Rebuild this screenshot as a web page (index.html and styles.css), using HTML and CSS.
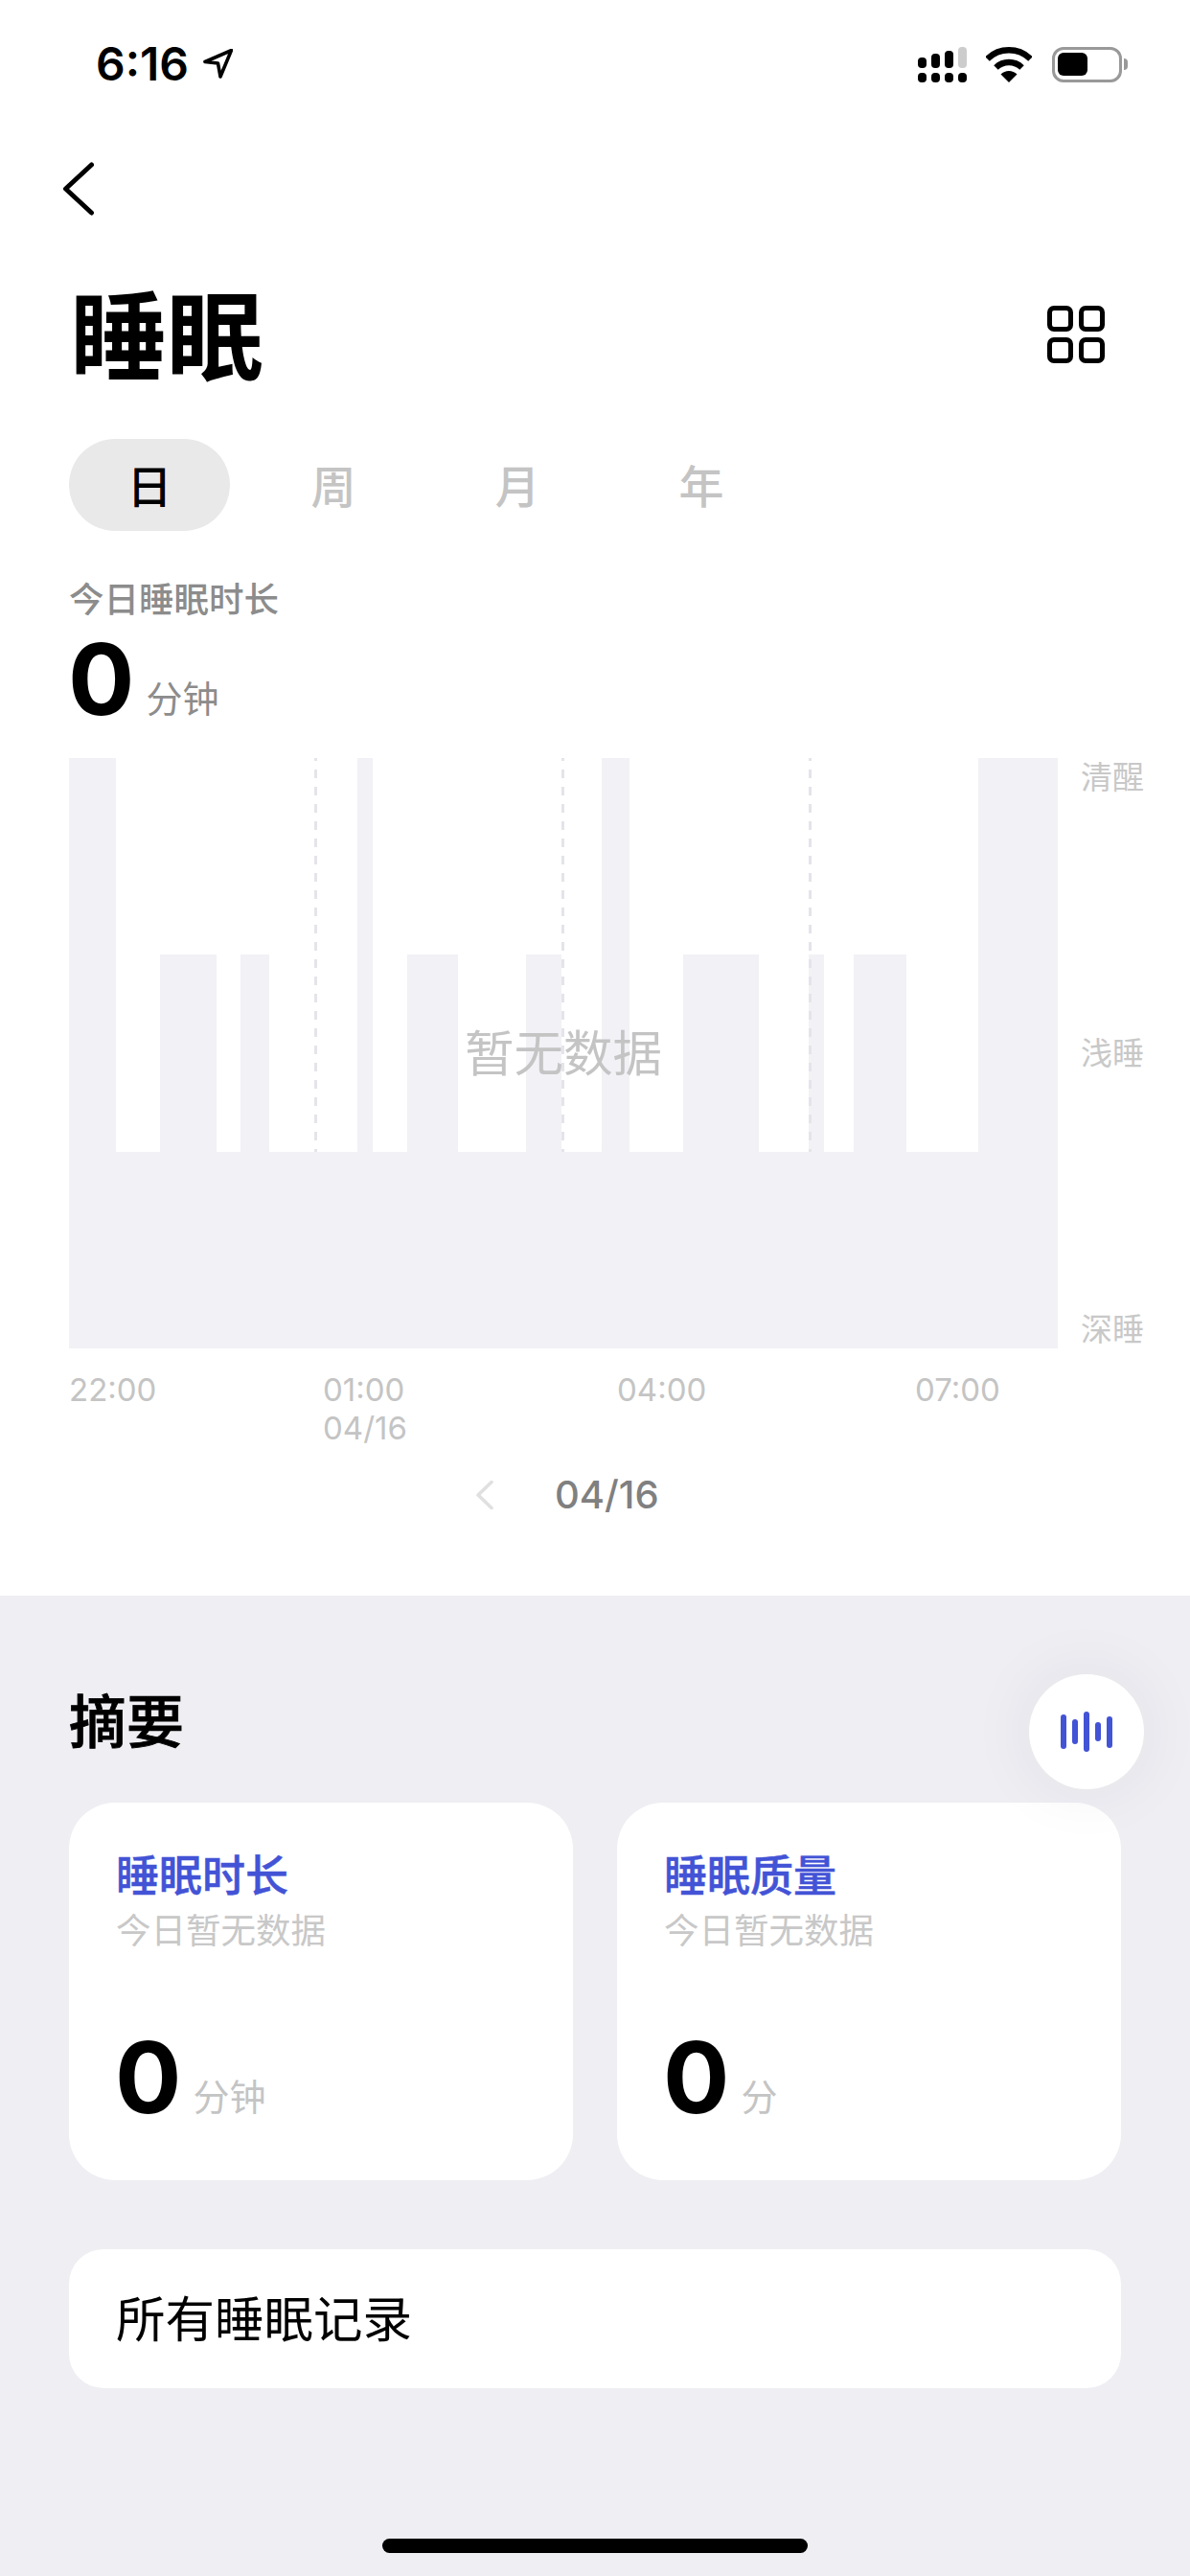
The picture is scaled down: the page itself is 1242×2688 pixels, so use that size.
FILE: index.html
```html
<!DOCTYPE html>
<html lang="zh-CN">
<head>
<meta charset="utf-8">
<title>睡眠</title>
<link rel="stylesheet" href="styles.css">
</head>
<body>
<div class="screen">
  <section class="top">
    <header class="status">
      <div class="status-left">
        <span class="time">6:16</span>
        <svg class="loc" width="31" height="31" viewBox="0 0 31 31"><path d="M29.500 1.500 2 13.500 15.500 15 18 29Z" fill="none" stroke="#000" stroke-width="3.600" stroke-linejoin="round"/></svg>
      </div>
      <div class="status-right">
        <svg width="51" height="37" viewBox="0 0 51 37">
          <rect x="0" y="11" width="9" height="11" rx="4" fill="#000"/><rect x="14" y="7" width="9" height="15" rx="4" fill="#000"/><rect x="28" y="4" width="9" height="18" rx="4" fill="#000"/><rect x="42" y="0" width="9" height="22" rx="4" fill="#ccc"/>
          <rect x="0" y="27" width="9" height="10" rx="4" fill="#000"/><rect x="14" y="27" width="9" height="10" rx="4" fill="#000"/><rect x="28" y="27" width="9" height="10" rx="4" fill="#000"/><rect x="42" y="27" width="9" height="10" rx="4" fill="#000"/>
        </svg>
        <svg width="48" height="37" viewBox="0 0 48 37">
          <path d="M1.500 12.500A32 32 0 0 1 46.500 12.500" fill="none" stroke="#000" stroke-width="6.500"/>
          <path d="M10.500 21.500A19.500 19.500 0 0 1 37.500 21.500" fill="none" stroke="#000" stroke-width="6.500"/>
          <path d="M24 37 15.500 28.500A12 12 0 0 1 32.500 28.500Z" fill="#000"/>
        </svg>
        <div class="battery"><div class="battery-level"></div></div>
        <div class="battery-nub"></div>
      </div>
    </header>
    <nav class="nav">
      <svg width="34" height="56" viewBox="0 0 34 56"><path d="M30.500 3 3.500 28 30.500 53" fill="none" stroke="#000" stroke-width="5" stroke-linecap="round" stroke-linejoin="round"/></svg>
    </nav>
    <div class="title-row">
      <h1 class="title">睡眠</h1>
      <div class="grid-icon"><i></i><i></i><i></i><i></i></div>
    </div>
    <div class="tabs">
      <span class="tab tab-active">日</span>
      <span class="tab">周</span>
      <span class="tab">月</span>
      <span class="tab">年</span>
    </div>
    <div class="today-label">今日睡眠时长</div>
    <div class="today-value"><span class="num">0</span><span class="unit">分钟</span></div>
    <div class="chart-row">
      <div class="chart">
        <svg width="1032" height="616" viewBox="0 0 1032 616">
          <g fill="#f1f1f6">
            <rect x="0" y="411" width="1032" height="205"/>
            <rect x="0" y="0" width="49" height="411"/>
            <rect x="301" y="0" width="16" height="411"/>
            <rect x="556" y="0" width="29" height="411"/>
            <rect x="949" y="0" width="83" height="411"/>
            <rect x="95" y="205" width="59" height="206"/>
            <rect x="179" y="205" width="30" height="206"/>
            <rect x="353" y="205" width="53" height="206"/>
            <rect x="477" y="205" width="37" height="206"/>
            <rect x="641" y="205" width="79" height="206"/>
            <rect x="772" y="205" width="16" height="206"/>
            <rect x="819" y="205" width="55" height="206"/>
          </g>
          <g stroke="#e4e4ea" stroke-width="3" stroke-dasharray="9 9" stroke-dashoffset="6">
            <line x1="257.500" y1="0" x2="257.500" y2="411"/>
            <line x1="515.500" y1="0" x2="515.500" y2="411"/>
            <line x1="773.500" y1="0" x2="773.500" y2="411"/>
          </g>
        </svg>
        <div class="empty">暂无数据</div>
      </div>
      <div class="levels"><span>清醒</span><span>浅睡</span><span>深睡</span></div>
    </div>
    <div class="times">
      <div>22:00</div>
      <div>01:00<br>04/16</div>
      <div>04:00</div>
      <div>07:00</div>
    </div>
    <div class="pager">
      <svg width="18" height="30" viewBox="0 0 18 30"><path d="M16 1.500 2 15 16 28.500" fill="none" stroke="#e0e0e0" stroke-width="3.600" stroke-linecap="round" stroke-linejoin="round"/></svg>
      <span class="pager-date">04/16</span>
    </div>
  </section>
  <section class="summary">
    <h2 class="summary-title">摘要</h2>
    <button class="fab" type="button" aria-label="语音">
      <svg width="54" height="42" viewBox="0 0 54 42">
        <g fill="#4353d6">
          <rect x="0" y="3" width="6" height="36" rx="3"/>
          <rect x="12" y="8" width="6" height="26" rx="3"/>
          <rect x="24" y="0" width="6" height="42" rx="3"/>
          <rect x="36" y="11" width="6" height="20" rx="3"/>
          <rect x="48" y="5" width="6" height="33" rx="3"/>
        </g>
      </svg>
    </button>
    <div class="cards">
      <article class="card">
        <div class="card-title">睡眠时长</div>
        <div class="card-sub">今日暂无数据</div>
        <div class="card-value"><span class="num">0</span><span class="unit unit-light">分钟</span></div>
      </article>
      <article class="card">
        <div class="card-title">睡眠质量</div>
        <div class="card-sub">今日暂无数据</div>
        <div class="card-value"><span class="num">0</span><span class="unit unit-light">分</span></div>
      </article>
    </div>
    <div class="records">所有睡眠记录</div>
    <div class="home-bar"></div>
  </section>
</div>
</body>
</html>
```
FILE: styles.css
```css
* { box-sizing: border-box; }
html, body { margin: 0; padding: 0; }
body {
  width: 1242px;
  height: 2688px;
  overflow: hidden;
  font-family: Inter, "Noto Sans CJK SC", sans-serif;
  color: #000;
}
.screen { display: flex; flex-direction: column; width: 1242px; height: 2688px; background: #eeeef3; }

.top { height: 1665px; background: #fff; padding-top: 48px; flex: none; }

.status { display: flex; justify-content: space-between; align-items: center; height: 38px; padding: 0 65px 0 100px; }
.status-left { display: flex; align-items: center; gap: 15px; }
.time { font-size: 48px; line-height: 38px; font-weight: 600; }
.loc { margin-top: -2px; }
.status-right { display: flex; align-items: center; }
.status-right svg:first-child { margin-right: 20px; }
.status-right svg:nth-child(2) { margin-right: 21px; }
.battery { width: 73px; height: 37px; border: 3.5px solid #999; border-radius: 12px; padding: 3px; }
.battery-level { width: 31px; height: 24px; background: #000; border-radius: 6px; }
.battery-nub { width: 4px; height: 12px; margin-left: 2px; background: #999; border-radius: 0 6px 6px 0; }

.nav { height: 56px; margin-top: 83px; padding-left: 65px; }
.nav svg { display: block; }

.title-row { display: flex; justify-content: space-between; align-items: center; height: 120px; margin-top: 60px; padding: 0 89px 0 73px; }
.title { margin: 0; font-size: 101px; line-height: 120px; font-weight: 700; font-family: "Noto Sans CJK SC", sans-serif; }
.grid-icon { display: grid; grid-template-columns: 27px 27px; grid-auto-rows: 27px; gap: 6px; width: 60px; margin-top: 8px; }
.grid-icon i { display: block; border: 5px solid #000; border-radius: 7px; }

.tabs { display: flex; gap: 24px; margin: 53px 0 0 72px; }
.tab { width: 168px; height: 96px; border-radius: 48px; text-align: center; font-size: 47px; line-height: 94px; color: #c4c4c4; font-weight: 500; font-family: "Noto Sans CJK SC", sans-serif; }
.tab-active { background: #e9e9e9; color: #000; }

.today-label { margin: 50px 0 0 72px; font-size: 36.500px; line-height: 40px; color: #8c8c8c; font-family: "Noto Sans CJK SC", sans-serif; font-weight: 500; }
.today-value { margin: 20px 0 0 71px; height: 90px; line-height: 90px; }
.num { font-size: 103px; line-height: 90px; font-weight: 700; }
.unit { margin-left: 12px; font-size: 38px; line-height: 40px; vertical-align: 3px; color: #8c8c8c; font-family: "Noto Sans CJK SC", sans-serif; font-weight: 400; }
.unit-light { color: #c4c4c4; }

.chart-row { display: flex; margin: 37px 0 0 72px; }
.chart { position: relative; width: 1032px; height: 616px; }
.chart svg { display: block; }
.empty { position: absolute; left: 0; right: 0; top: calc(50% - 33px); text-align: center; font-size: 51.500px; line-height: 60px; color: #c4c4c4; font-family: "Noto Sans CJK SC", sans-serif; }
.levels { display: flex; flex-direction: column; justify-content: space-between; margin: -2px 0 2px 24px; }
.levels span { font-size: 33px; line-height: 40px; color: #c8c8c8; font-family: "Noto Sans CJK SC", sans-serif; }

.times { display: grid; grid-template-columns: 265px 307px 311px auto; margin: 23px 0 0 72px; font-size: 33px; line-height: 40px; color: #c4c4c4; }

.pager { display: flex; align-items: center; margin-top: 25px; padding-left: 497px; height: 50px; }
.pager-date { margin-left: 64px; font-size: 40px; line-height: 50px; color: #808080; font-weight: 500; }

.summary { position: relative; flex: 1; padding: 0 72px; }
.summary-title { margin: 0; padding-top: 90px; font-size: 60px; line-height: 76px; font-weight: 500; -webkit-text-stroke: 0.8px #000; font-family: "Noto Sans CJK SC", sans-serif; }
.fab { position: absolute; top: 82px; right: 48px; z-index: 2; display: flex; align-items: center; justify-content: center; width: 120px; height: 120px; padding: 0; border: 0; border-radius: 50%; background: #fff; box-shadow: 0 0 70px rgba(40, 40, 70, 0.07); }

.cards { display: grid; grid-template-columns: 526px 526px; gap: 46px; margin-top: 50px; }
.card { height: 394px; border-radius: 48px; background: #fff; padding: 49px 49px 0; }
.card-title { font-size: 45px; line-height: 50px; color: #4353d6; font-weight: 500; -webkit-text-stroke: 0.5px #4353d6; font-family: "Noto Sans CJK SC", sans-serif; }
.card-sub { margin-top: 11px; font-size: 36.500px; line-height: 44px; color: #c8c8c8; font-family: "Noto Sans CJK SC", sans-serif; }
.card-value { margin-top: 88px; margin-left: -1px; height: 90px; line-height: 90px; }

.records { margin-top: 72px; height: 145px; border-radius: 36px; background: #fff; padding-left: 49px; font-size: 51.500px; line-height: 140px; font-family: "Noto Sans CJK SC", sans-serif; }

.home-bar { width: 444px; height: 15px; margin: 157px 0 0 327px; border-radius: 8px; background: #000; }
```
